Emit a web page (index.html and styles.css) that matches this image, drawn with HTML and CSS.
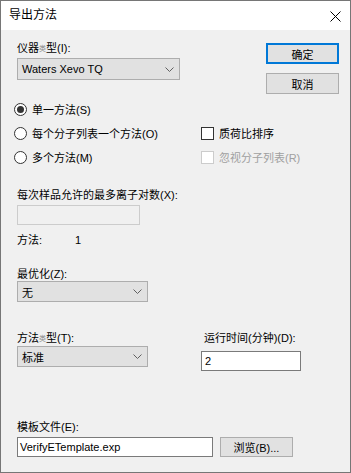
FILE: index.html
```html
<!DOCTYPE html>
<html lang="zh-CN">
  <head>
    <meta charset="UTF-8" />
    <title>导出方法</title>
    <meta name="viewport" content="width=device-width, initial-scale=1.0" />
    <link rel="stylesheet" href="styles.css">
  </head>

  <body>
    <div class="dialog">
      <div class="titlebar">
        <span class="title">导出方法</span>
        <svg class="close-icon" width="11" height="11" viewBox="0 0 11 11">
          <path d="M0.5 0.5 L10.5 10.5 M10.5 0.5 L0.5 10.5" stroke="#000" stroke-width="1" fill="none" />
        </svg>
      </div>

      <div class="content">
        <div class="top-row">
          <div class="instrument">
            <div class="field-label">仪器<span class="tiny">类</span>型(I):</div>
            <div class="combo combo-instrument">
              <span>Waters Xevo TQ</span>
              <svg class="chevron" width="9" height="5" viewBox="0 0 9 5">
                <polyline points="0.5,0.5 4.5,4.5 8.5,0.5" stroke="#606060" fill="none" />
              </svg>
            </div>
          </div>
          <div class="button-col">
            <button class="btn btn-default">确定</button>
            <button class="btn">取消</button>
          </div>
        </div>

        <div class="options">
          <label class="opt">
            <span class="radio checked"></span>单一方法(S)
          </label>
          <span></span>
          <label class="opt">
            <span class="radio"></span>每个分子列表一个方法(O)
          </label>
          <label class="opt">
            <span class="check"></span>质荷比排序
          </label>
          <label class="opt">
            <span class="radio"></span>多个方法(M)
          </label>
          <label class="opt disabled">
            <span class="check"></span>忽视分子列表(R)
          </label>
        </div>

        <div class="field-label label-pairs">每次样品允许的最多离子对数(X):</div>
        <div class="textbox textbox-disabled"></div>

        <div class="methods-count">
          <span class="count-label">方法:</span>
          <span>1</span>
        </div>

        <div class="field-label label-optimize">最优化(Z):</div>
        <div class="combo combo-small">
          <span>无</span>
          <svg class="chevron" width="9" height="5" viewBox="0 0 9 5">
            <polyline points="0.5,0.5 4.5,4.5 8.5,0.5" stroke="#606060" fill="none" />
          </svg>
        </div>

        <div class="type-row">
          <div class="type-col">
            <div class="field-label">方法<span class="tiny">类</span>型(T):</div>
            <div class="combo combo-small combo-type">
              <span>标准</span>
              <svg class="chevron" width="9" height="5" viewBox="0 0 9 5">
                <polyline points="0.5,0.5 4.5,4.5 8.5,0.5" stroke="#606060" fill="none" />
              </svg>
            </div>
          </div>
          <div class="runtime-col">
            <div class="field-label runtime-label">运行时间(分钟)(D):</div>
            <div class="textbox textbox-runtime">2</div>
          </div>
        </div>

        <div class="field-label label-template">模板文件(E):</div>
        <div class="template-row">
          <div class="textbox textbox-template">VerifyETemplate.exp</div>
          <button class="btn btn-browse">浏览(B)...</button>
        </div>
      </div>
    </div>
  </body>
</html>
```

FILE: styles.css
```css
:root {
  --face: #f0f0f0;
  --control: #e1e1e1;
  --control-border: #adadad;
  --accent: #0078d7;
  --text: #000;
  --disabled: #a0a0a0;
}

html,
body {
  margin: 0;
  background: var(--face);
  font-family: "Liberation Sans", "Noto Sans CJK SC", sans-serif;
  font-size: 11px;
  color: var(--text);
}

.dialog {
  width: 351px;
  height: 473px;
  box-sizing: border-box;
  border: 1px solid #767676;
  display: flex;
  flex-direction: column;
}

.titlebar {
  height: 29px;
  background: #fff;
  display: flex;
  align-items: center;
  justify-content: space-between;
  padding-left: 8px;
  padding-right: 9px;
}

.title {
  font-size: 12px;
  line-height: 29px;
}

.close-icon {
  display: block;
  margin-top: 1px;
}

.content {
  flex: 1;
  background: var(--face);
  padding: 12px 11px 0 16px;
}

.field-label {
  line-height: 13px;
  height: 13px;
  white-space: nowrap;
}

.tiny {
  font-size: 7px;
  color: #8a8a8a;
  vertical-align: 1px;
}

/* combo boxes */
.combo {
  box-sizing: border-box;
  height: 21px;
  background: var(--control);
  border: 1px solid var(--control-border);
  display: flex;
  align-items: center;
  justify-content: space-between;
  padding: 0 5px 0 4px;
}

.combo-instrument {
  width: 163px;
  height: 22px;
  margin-top: 3px;
}

.combo-small {
  width: 131px;
}

.chevron {
  display: block;
}

/* top row */
.top-row {
  display: flex;
  justify-content: space-between;
  align-items: flex-start;
}

.button-col {
  display: flex;
  flex-direction: column;
  gap: 9px;
  margin-top: 1px;
}

.btn {
  box-sizing: border-box;
  width: 73px;
  height: 21px;
  padding: 0;
  background: var(--control);
  border: 1px solid var(--control-border);
  font-family: inherit;
  font-size: 11px;
  color: var(--text);
}

.btn-default {
  border: 2px solid var(--accent);
}

/* radios and checkboxes */
.options {
  margin: 3px 0 0 -3px;
  display: grid;
  grid-template-columns: 187px 1fr;
  grid-auto-rows: 24px;
}

.opt {
  display: flex;
  align-items: center;
  gap: 5px;
  white-space: nowrap;
}

.opt.disabled {
  color: var(--disabled);
}

.radio {
  box-sizing: border-box;
  width: 13px;
  height: 13px;
  border: 1px solid #333;
  border-radius: 50%;
  background: #fff;
  display: flex;
  align-items: center;
  justify-content: center;
}

.radio.checked::after {
  content: "";
  width: 7px;
  height: 7px;
  border-radius: 50%;
  background: #333;
}

.check {
  box-sizing: border-box;
  width: 13px;
  height: 13px;
  border: 1px solid #333;
  background: #fff;
}

.disabled .check {
  border-color: #cccccc;
}

/* text boxes */
.textbox {
  box-sizing: border-box;
  height: 20px;
  background: #fff;
  border: 1px solid #7a7a7a;
  line-height: 18px;
  padding-left: 2px;
}

.label-pairs {
  margin-top: 20px;
}

.textbox-disabled {
  width: 123px;
  margin-top: 3px;
  background: var(--face);
  border-color: #cccccc;
}

.methods-count {
  display: flex;
  margin-top: 9px;
  line-height: 13px;
}

.count-label {
  width: 58px;
}

.label-optimize {
  margin-top: 21px;
}

.type-row {
  display: flex;
  margin-top: 30px;
}

.type-col {
  width: 184px;
}

.combo-type {
  margin-top: 1px;
}

.runtime-label {
  padding-left: 3px;
}

.textbox-runtime {
  width: 100px;
  margin-top: 6px;
  padding-left: 3px;
}

.label-template {
  margin-top: 50px;
}

.template-row {
  display: flex;
  gap: 7px;
  margin-top: 3px;
}

.textbox-template {
  width: 196px;
}

.btn-browse {
  height: 20px;
}
```
